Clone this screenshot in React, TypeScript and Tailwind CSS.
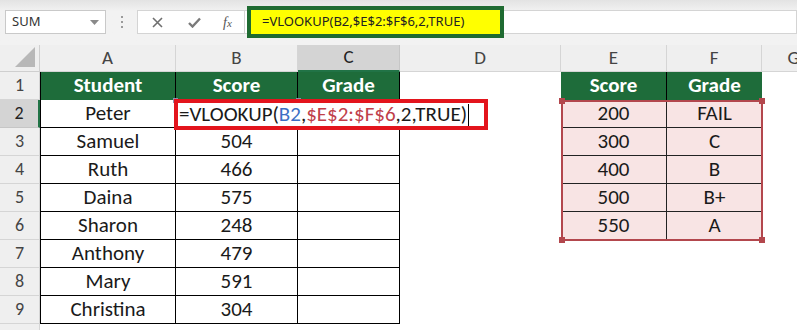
import React from 'react';

const cellFont = { fontFamily: 'Carlito, Lato, "Open Sans", sans-serif' };
const uiFont = { fontFamily: '"Noto Sans", "Open Sans", sans-serif' };

const names = ['Peter', 'Samuel', 'Ruth', 'Daina', 'Sharon', 'Anthony', 'Mary', 'Christina'];
const scores = ['', '504', '466', '575', '248', '479', '591', '304'];
const lookup = [
  ['200', 'FAIL'],
  ['300', 'C'],
  ['400', 'B'],
  ['500', 'B+'],
  ['550', 'A'],
];
const letters = ['A', 'B', 'C', 'D', 'E', 'F', 'G'];

const Toolbar: React.FC = () => (
  <div className="h-[45px] bg-linear-to-b from-[#e3e3e3] to-[#f2f2f2] to-[25%] flex items-start pt-[10px]" style={uiFont}>
    <div className="ml-[5px] w-[101px] h-[24px] bg-white border border-[#c9c9c9] flex items-center justify-between pl-[6px] pr-[6px]">
      <span className="text-[13px] text-[#333]">SUM</span>
      <svg width="9" height="5" viewBox="0 0 9 5">
        <path d="M0 0 L9 0 L4.5 5 Z" fill="#8a8a8a" />
      </svg>
    </div>
    <div className="w-[31px] h-[24px] flex flex-col items-center justify-center gap-[3px]">
      <span className="w-[2px] h-[2px] bg-[#9a9a9a]" />
      <span className="w-[2px] h-[2px] bg-[#9a9a9a]" />
      <span className="w-[2px] h-[2px] bg-[#9a9a9a]" />
    </div>
    <div className="w-[108px] h-[24px] bg-white border border-[#d4d4d4] flex items-center">
      <svg className="ml-[14px]" width="11" height="11" viewBox="0 0 11 11">
        <path d="M1 1 L10 10 M10 1 L1 10" stroke="#6f6f6f" strokeWidth="1.6" />
      </svg>
      <svg className="ml-[25px]" width="13" height="11" viewBox="0 0 13 11">
        <path d="M1 6 L4.5 9.5 L12 1.5" stroke="#7a7a7a" strokeWidth="2.4" fill="none" />
      </svg>
      <span className="ml-[22px] text-[14px] italic text-[#555]" style={{ fontFamily: '"Liberation Serif", serif' }}>
        f<span className="text-[11px]">x</span>
      </span>
    </div>
    <div className="flex-1 h-[24px] bg-white border border-[#d4d4d4] border-l-0">
      <div className="ml-[2px] -mt-[5px] w-[257px] h-[32px] border-4 border-[#1f6b32] bg-[#ffff00] flex items-center pl-[11px] text-[13px] text-[#222]">
        =VLOOKUP(B2,$E$2:$F$6,2,TRUE)
      </div>
    </div>
  </div>
);

const rowHeaderCls = (r: number) =>
  r === 2
    ? 'bg-[#d4d4d4] border-b border-[#c6c6c6] border-r-2 border-r-[#217346] text-[#222]'
    : 'bg-[#efefef] border-b border-r border-[#d5d5d5] text-[#444]';

const Sheet: React.FC = () => {
  const cells: React.ReactNode[] = [];

  // column header row
  cells.push(
    <div key="corner" className="bg-[#efefef] border-r border-b border-[#cfcfcf] flex items-end justify-end pr-[4px] pb-[4px]">
      <svg width="20" height="20" viewBox="0 0 20 20">
        <path d="M20 0 L20 20 L0 20 Z" fill="#b8b8b8" />
      </svg>
    </div>
  );
  letters.forEach((l) => {
    const active = l === 'C';
    cells.push(
      <div
        key={`h${l}`}
        className={`flex items-center justify-center text-[19px] ${
          active
            ? 'bg-[#d4d4d4] border-r border-[#c6c6c6] border-b-2 border-b-[#217346] text-[#222]'
            : 'bg-[#efefef] border-r border-b border-[#d5d5d5] text-[#444]'
        }`}
      >
        {l}
      </div>
    );
  });

  for (let r = 1; r <= 10; r++) {
    cells.push(
      <div key={`r${r}`} className={`flex items-center justify-center text-[18px] ${rowHeaderCls(r)}`}>
        {r < 10 ? r : ''}
      </div>
    );
    const inTable = r <= 9;
    // A, B, C
    for (let c = 0; c < 3; c++) {
      let content = '';
      let cls = '';
      if (r === 1) {
        content = ['Student', 'Score', 'Grade'][c];
        cls = 'bg-[#1e6c3a] text-white font-bold border-r border-black';
        if (c === 0) cls += ' border-l';
      } else if (inTable) {
        content = c === 0 ? names[r - 2] : c === 1 ? scores[r - 2] : '';
        cls = 'bg-white text-[#1a1a1a] border-r border-b border-black';
        if (c === 0) cls += ' border-l';
      } else {
        cls = 'bg-white';
      }
      cells.push(
        <div key={`c${r}-${c}`} className={`flex items-center justify-center text-[21px] ${cls}`}>
          {content}
        </div>
      );
    }
    // D
    cells.push(<div key={`d${r}`} className="bg-white" />);
    // E, F
    for (let c = 0; c < 2; c++) {
      let content = '';
      let cls = 'bg-white';
      if (r === 1) {
        content = c === 0 ? 'Score' : 'Grade';
        cls = `bg-[#1e6c3a] text-white font-bold ${c === 0 ? 'border-r border-black' : ''}`;
      } else if (r >= 2 && r <= 6) {
        content = lookup[r - 2][c];
        cls = `bg-[#f8e4e4] text-[#1a1a1a] ${r < 6 ? 'border-b border-[#222]' : ''} ${c === 0 ? 'border-r border-[#222]' : ''}`;
      }
      cells.push(
        <div key={`e${r}-${c}`} className={`flex items-center justify-center text-[21px] ${cls}`}>
          {content}
        </div>
      );
    }
    // G
    cells.push(<div key={`g${r}`} className="bg-white" />);
  }

  return (
    <div className="relative" style={cellFont}>
      <div className="grid grid-cols-[40px_136px_122px_102px_161px_106px_95px_64px] grid-rows-[27px_repeat(10,28px)]">
        {cells}
      </div>

      {/* B2 range handles */}
      <span className="absolute left-[173px] top-[53px] w-[5px] h-[5px] bg-[#8c8fb0]" />
      <span className="absolute left-[296px] top-[53px] w-[5px] h-[5px] bg-[#8c8fb0]" />

      {/* lookup range highlight */}
      <div className="absolute left-[561px] top-[55px] w-[202px] h-[141px] border-2 border-[#b3474d]">
        <span className="absolute -left-[4px] -top-[4px] w-[6px] h-[6px] bg-[#b3474d]" />
        <span className="absolute -right-[4px] -top-[4px] w-[6px] h-[6px] bg-[#b3474d]" />
        <span className="absolute -left-[4px] -bottom-[4px] w-[6px] h-[6px] bg-[#b3474d]" />
        <span className="absolute -right-[4px] -bottom-[4px] w-[6px] h-[6px] bg-[#b3474d]" />
      </div>

      {/* in-cell edit */}
      <div className="absolute left-[174px] top-[54px] w-[314px] h-[31px] border-4 border-[#e3141c] bg-white flex items-center pl-[1px] text-[21px] text-[#1a1a1a]">
        <span>=VLOOKUP(</span>
        <span className="text-[#3c6fc4]">B2</span>
        <span>,</span>
        <span className="text-[#c0404a]">$E$2:$F$6</span>
        <span>,2,TRUE)</span>
        <span className="ml-[1px] w-[1px] h-[22px] bg-black" />
      </div>
    </div>
  );
};

export default function App() {
  return (
    <div className="w-[797px] h-[330px] overflow-hidden bg-white">
      <Toolbar />
      <Sheet />
    </div>
  );
}
